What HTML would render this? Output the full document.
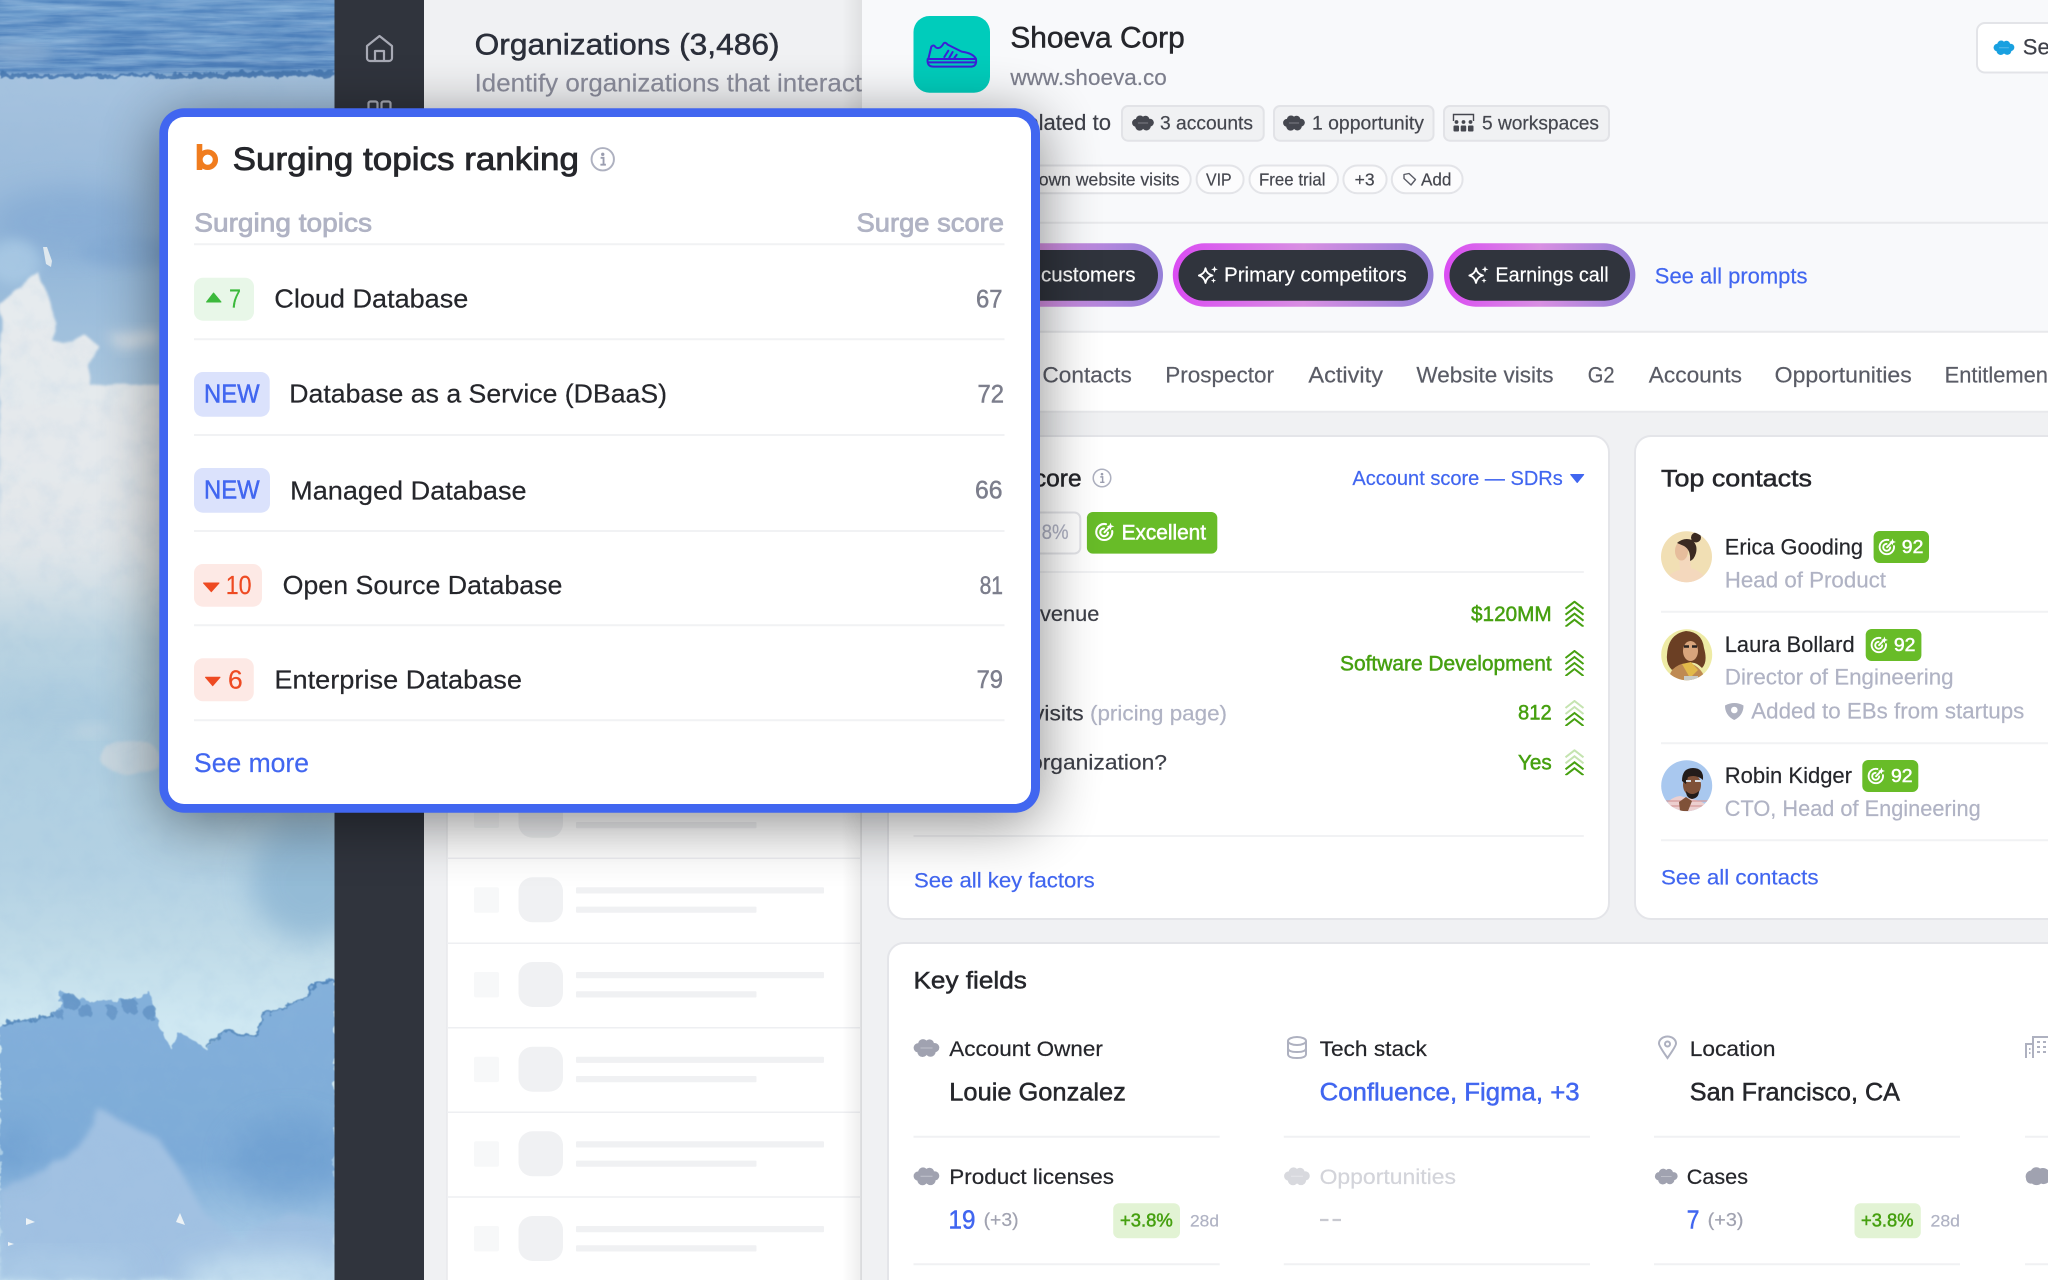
<!DOCTYPE html>
<html lang="en"><head><meta charset="utf-8"><title>Surging topics ranking</title>
<style>
html,body{margin:0;padding:0;width:2048px;height:1280px;overflow:hidden;background:#fff}
svg{display:block;position:absolute;left:0;top:0;overflow:hidden}
text{fill:currentColor;stroke:currentColor;stroke-width:.2;font-family:"Liberation Sans",Arial,sans-serif;white-space:pre}
.m{stroke-width:.5}.s{stroke-width:.8}
.d{color:#25262b}.g{color:#b0b3c4}.b{color:#4166f0}.t{color:#7c7e8c}.k{color:#3e4049}.l{color:#46a010}.w{color:#fff}.r{color:#ee4a22}.u{color:#5a5c66}
</style></head><body>
<svg width="2048" height="1280" viewBox="0 0 2048 1280" xmlns="http://www.w3.org/2000/svg">
<defs>
<clipPath id="bgc"><rect width="335" height="1280"/></clipPath>
<clipPath id="a1"><circle cx="1686.5" cy="556.7" r="25.5"/></clipPath>
<clipPath id="a2"><circle cx="1686.7" cy="654.7" r="25.5"/></clipPath>
<clipPath id="a3"><circle cx="1686.7" cy="785.7" r="25.5"/></clipPath>
<linearGradient id="base" x1="0" y1="0" x2="0" y2="1">
<stop offset="0" stop-color="#5386bf"/><stop offset=".055" stop-color="#4a7cb8"/><stop offset=".06" stop-color="#a6c3df"/><stop offset=".11" stop-color="#a0bedc"/><stop offset=".2" stop-color="#94b7d9"/><stop offset=".3" stop-color="#a9c6de"/><stop offset=".42" stop-color="#e0e6ea"/><stop offset=".47" stop-color="#ccdce5"/><stop offset=".5" stop-color="#bad3e1"/><stop offset=".56" stop-color="#afcee0"/><stop offset=".68" stop-color="#b3d1e3"/><stop offset=".74" stop-color="#c0dbe8"/><stop offset=".8" stop-color="#cfe8f2"/><stop offset="1" stop-color="#cfe8f2"/>
</linearGradient>
<linearGradient id="low" x1="0" y1="0" x2="0" y2="1">
<stop offset="0" stop-color="#84b0da"/><stop offset=".6" stop-color="#7dabd8"/><stop offset=".85" stop-color="#a2c6e4"/><stop offset="1" stop-color="#c2def0"/>
</linearGradient>
<linearGradient id="whf" x1="0" y1="0" x2="0" y2="1">
<stop offset="0" stop-color="#e6ebee"/><stop offset=".7" stop-color="#e4e8eb"/><stop offset="1" stop-color="#dfe5e9" stop-opacity="0"/>
</linearGradient>
<linearGradient id="pr" x1="0" y1="0" x2="1" y2="0">
<stop offset="0" stop-color="#da4cf2"/><stop offset=".5" stop-color="#d88fe2"/><stop offset="1" stop-color="#9580d8"/>
</linearGradient>
<linearGradient id="lsh" x1="0" y1="0" x2="1" y2="0">
<stop offset="0" stop-color="#000" stop-opacity="0"/><stop offset="1" stop-color="#000" stop-opacity=".07"/>
</linearGradient>
<filter id="w1" x="-10%" y="-10%" width="120%" height="120%"><feTurbulence type="fractalNoise" baseFrequency=".035" numOctaves="3" seed="4" result="n"/><feDisplacementMap in="SourceGraphic" in2="n" scale="9" result="d"/><feGaussianBlur in="d" stdDeviation="1.4"/></filter>
<filter id="w3" x="-10%" y="-10%" width="120%" height="120%"><feTurbulence type="fractalNoise" baseFrequency=".04" numOctaves="3" seed="6" result="n"/><feDisplacementMap in="SourceGraphic" in2="n" scale="12" result="d"/><feGaussianBlur in="d" stdDeviation="3"/></filter>
<filter id="w2" x="-10%" y="-10%" width="120%" height="120%"><feTurbulence type="fractalNoise" baseFrequency=".11" numOctaves="3" seed="9" result="n"/><feDisplacementMap in="SourceGraphic" in2="n" scale="10" result="d"/><feGaussianBlur in="d" stdDeviation=".6"/></filter>
<filter id="bl" x="-40%" y="-40%" width="180%" height="180%"><feGaussianBlur stdDeviation="14"/></filter>
<filter id="bl2" x="-40%" y="-40%" width="180%" height="180%"><feGaussianBlur stdDeviation="6"/></filter>
<filter id="sh" x="-30%" y="-30%" width="160%" height="160%"><feGaussianBlur stdDeviation="30"/></filter>
<filter id="str" x="0" y="0" width="100%" height="100%"><feTurbulence type="fractalNoise" baseFrequency=".012 .16" numOctaves="4" seed="3"/><feColorMatrix values="0 0 0 0 .22  0 0 0 0 .42  0 0 0 0 .68  1.8 0 0 0 -.55"/></filter>
<filter id="str2" x="0" y="0" width="100%" height="100%"><feTurbulence type="fractalNoise" baseFrequency=".02 .2" numOctaves="3" seed="11"/><feColorMatrix values="0 0 0 0 .6  0 0 0 0 .73  0 0 0 0 .88  2 0 0 0 -.8"/></filter>
<filter id="nz" x="0" y="0" width="100%" height="100%"><feTurbulence type="fractalNoise" baseFrequency=".05" numOctaves="4" seed="7"/><feColorMatrix values="0 0 0 0 .3  0 0 0 0 .5  0 0 0 0 .72  1.2 0 0 0 -.5"/></filter>
<symbol id="cl" viewBox="0 0 26 18" overflow="visible"><g fill="currentColor"><circle cx="9.5" cy="5" r="4.9"/><circle cx="16" cy="5" r="4.6"/><circle cx="21.2" cy="8.6" r="4.6"/><circle cx="17" cy="12.6" r="5.2"/><circle cx="9" cy="12.8" r="5.2"/><circle cx="4.8" cy="8.8" r="4.7"/><rect x="5" y="5" width="16" height="8"/></g><rect x="7" y="8.4" width="12" height="1.2" fill="#fff" opacity=".3"/></symbol>
<symbol id="ch" viewBox="0 0 20 26"><path d="M1 8 10 1l9 7M1 14l9-7 9 7M1 20l9-7 9 7M1 26l9-7 9 7" fill="none" stroke="#46a010" stroke-width="2"/></symbol>
<symbol id="chf" viewBox="0 0 20 26"><path d="M1 8 10 1l9 7M1 14l9-7 9 7" fill="none" stroke="#c5e4b0" stroke-width="2"/><path d="M1 20l9-7 9 7M1 26l9-7 9 7" fill="none" stroke="#46a010" stroke-width="2"/></symbol>
<symbol id="tg" viewBox="0 0 20 20"><g fill="none" stroke="#fff" stroke-width="2.1" stroke-linecap="round"><path d="M17.2 9A8 8 0 1 1 11 2.2"/><path d="M13 10.5A3.9 3.9 0 1 1 9 6.4"/><path d="M9.5 10.2 15.5 4"/></g><path d="M15.5 .6l1 2.8 2.9 1-2.9 1-1 2.8-1-2.8-2.8-1 2.8-1z" fill="#fff"/></symbol>
<symbol id="sp" viewBox="0 0 21 18"><path d="M7.5 2.2Q8.5 8 14.5 9.5 8.5 11 7.5 17 6.5 11 .8 9.5 6.5 8 7.5 2.2Z" fill="none" stroke="#fff" stroke-width="1.8" stroke-linejoin="round"/><path d="M16.5 0l.9 2.5 2.5.9-2.5.9-.9 2.5-.9-2.5-2.5-.9 2.5-.9zM15.5 12l.7 1.9 1.9.7-1.9.7-.7 1.9-.7-1.9-1.9-.7 1.9-.7z" fill="#fff"/></symbol>
<symbol id="inf" viewBox="0 0 26 26"><circle cx="13" cy="13" r="11.4" fill="none" stroke="#aeb1c0" stroke-width="2"/><circle cx="13" cy="8" r="1.7" fill="#9a9daf"/><path d="M10.8 11.5h3v7M10.6 18.6h5.6" fill="none" stroke="#9a9daf" stroke-width="1.9"/></symbol>
</defs>

<!-- watercolor -->
<g clip-path="url(#bgc)">
<rect width="335" height="1280" fill="url(#base)"/>
<rect width="335" height="74" filter="url(#str)"/>
<rect width="335" height="72" filter="url(#str2)" opacity=".28"/>
<ellipse cx="18" cy="52" rx="36" ry="9" fill="#90b0d3" filter="url(#bl2)" opacity=".8"/>
<path d="M0 73Q100 76 200 73T335 70V76Q200 79 0 78Z" fill="#3c70ab" filter="url(#w2)" opacity=".8"/>
<ellipse cx="70" cy="222" rx="80" ry="34" fill="#84aad4" filter="url(#bl)" opacity=".75"/>
<ellipse cx="130" cy="252" rx="50" ry="16" fill="#7ea6d1" filter="url(#bl2)" opacity=".55"/>
<ellipse cx="14" cy="262" rx="26" ry="22" fill="#abcbe5" filter="url(#bl2)" opacity=".8"/>
<path d="M0 305 38 272 58 325 52 340 62 343 85 335 98 345 88 365 90 385 159 383 175 395 335 400V600H0Z" fill="url(#whf)" filter="url(#w1)"/>
<path d="M43 247h4l5 14-1 6-5-3z" fill="#dfe8ee"/>
<path d="M105 335 158 330V345L120 350Z" fill="#d9e0e5" filter="url(#bl2)" opacity=".8"/>
<ellipse cx="130" cy="757" rx="30" ry="17" fill="#c8d7e0" filter="url(#w1)"/>
<ellipse cx="90" cy="730" rx="22" ry="6" fill="#c4d8e3" filter="url(#bl2)"/>
<ellipse cx="60" cy="710" rx="70" ry="24" fill="#a8c8dd" filter="url(#bl)" opacity=".6"/>
<ellipse cx="310" cy="880" rx="60" ry="60" fill="#86b1d0" filter="url(#bl)" opacity=".7"/>
<path d="M0 1023 30 1020 55 1015 62 992 90 1002 115 1000 127 1000 150 992 160 1028 170 1048 180 1032 205 1048 225 1032 255 1036 262 1015 275 1012 300 1000 320 980 335 980V1280H0Z" fill="url(#low)" filter="url(#w2)"/>
<path d="M0 1023 30 1020 55 1015M205 1046 225 1032 255 1036 262 1015 275 1012 300 1000 320 982 335 982" fill="none" stroke="#4a7fb5" stroke-width="2.4" filter="url(#w2)" opacity=".8"/>
<g fill="#5f90c2" filter="url(#w2)" opacity=".75"><circle cx="70" cy="1002" r="8"/><circle cx="85" cy="1011" r="7"/><circle cx="130" cy="1006" r="8"/><circle cx="150" cy="1012" r="7"/><circle cx="60" cy="1014" r="5"/><circle cx="112" cy="1012" r="6"/></g>
<path d="M0 1190 40 1170 75 1150 100 1110 130 1125 160 1140 180 1170 205 1215 240 1240 290 1210 335 1225V1280H0Z" fill="#a1c1e2" filter="url(#w3)"/>
<ellipse cx="290" cy="1160" rx="60" ry="42" fill="#6a9ccf" filter="url(#bl)" opacity=".6"/>
<ellipse cx="12" cy="1150" rx="22" ry="28" fill="#6a9ccf" filter="url(#bl)" opacity=".55"/>
<ellipse cx="270" cy="1278" rx="90" ry="26" fill="#c6e0f0" filter="url(#bl)" opacity=".9"/>
<ellipse cx="60" cy="1272" rx="80" ry="16" fill="#b3d1ea" filter="url(#bl)" opacity=".7"/>
<path d="M26 1218l9 4-9 3zM180 1213l5 12-9-3zM8 1242l6 2-6 2z" fill="#eef3f6"/>
<rect width="335" height="1280" filter="url(#nz)" opacity=".22"/>
</g>

<!-- sidebar -->
<rect x="334.5" width="90" height="1280" fill="#30343d"/>
<path d="M367 46 379.5 36 392 46V58a3 3 0 0 1-3 3H370a3 3 0 0 1-3-3ZM375 61V51h9V61" fill="none" stroke="#a8aab5" stroke-width="2.2" stroke-linejoin="round"/>
<rect x="368.5" y="101.5" width="9" height="12" rx="2" fill="none" stroke="#a8aab5" stroke-width="2.2"/>
<rect x="381.5" y="101.5" width="9" height="12" rx="2" fill="none" stroke="#a8aab5" stroke-width="2.2"/>

<!-- main panel -->
<rect x="424" width="438" height="1280" fill="#f0f1f3"/>
<text x="474.6" y="54.3" font-size="29.5" textLength="305" lengthAdjust="spacingAndGlyphs" class="m" style="color:#2b2f3a">Organizations (3,486)</text>
<text x="474.6" y="91.3" font-size="25" textLength="387.4" lengthAdjust="spacingAndGlyphs" style="color:#8b8d9c">Identify organizations that interact</text>
<rect x="447" y="118" width="414.5" height="1162" fill="#fff"/>
<path d="M447 118V1280M861 118V1280" stroke="#e8e9ec" stroke-width="1.5"/>
<path d="M447 858.3H861M447 943.3H861M447 1027.7H861M447 1112.3H861M447 1197H861" stroke="#eeeff2" stroke-width="1.5"/>
<g fill="#f7f8f9"><rect x="474" y="802.6" width="25" height="25.4" rx="2"/><rect x="474" y="887.3" width="25" height="25.4" rx="2"/><rect x="474" y="972" width="25" height="25.4" rx="2"/><rect x="474" y="1056.7" width="25" height="25.4" rx="2"/><rect x="474" y="1141.3" width="25" height="25.4" rx="2"/><rect x="474" y="1226" width="25" height="25.4" rx="2"/></g>
<g fill="#f0f1f3">
<rect x="518.5" y="792.7" width="44.5" height="45" rx="14"/><rect x="518.5" y="877.3" width="44.5" height="45" rx="14"/><rect x="518.5" y="962" width="44.5" height="45" rx="14"/><rect x="518.5" y="1046.7" width="44.5" height="45" rx="14"/><rect x="518.5" y="1131.3" width="44.5" height="45" rx="14"/><rect x="518.5" y="1216" width="44.5" height="45" rx="14"/>
<rect x="576" y="822" width="180.5" height="6.2" rx="1"/>
<rect x="576" y="887.3" width="248" height="6.2" rx="1"/><rect x="576" y="906.6" width="180.5" height="6.2" rx="1"/>
<rect x="576" y="972" width="248" height="6.2" rx="1"/><rect x="576" y="991.3" width="180.5" height="6.2" rx="1"/>
<rect x="576" y="1056.7" width="248" height="6.2" rx="1"/><rect x="576" y="1076" width="180.5" height="6.2" rx="1"/>
<rect x="576" y="1141.3" width="248" height="6.2" rx="1"/><rect x="576" y="1160.6" width="180.5" height="6.2" rx="1"/>
<rect x="576" y="1226" width="248" height="6.2" rx="1"/><rect x="576" y="1245.3" width="180.5" height="6.2" rx="1"/>
</g>
<rect x="842" width="20" height="1280" fill="url(#lsh)"/>

<!-- right panel -->
<rect x="862" width="1186" height="1280" fill="#f0f1f3"/>
<rect x="862" width="1186" height="332" fill="#f8f9fb"/>
<rect x="862" y="332" width="1186" height="80" fill="#fff"/>
<path d="M862 222.7H2048M862 331.7H2048M862 411.7H2048" stroke="#e8e9ec" stroke-width="2"/>
<rect x="913.5" y="16" width="76.5" height="76.7" rx="16" fill="#00ccbb"/>
<g transform="translate(905 10) scale(.3333)" fill="none" stroke="#3b1fd6" stroke-width="6" stroke-linecap="round" stroke-linejoin="round">
<path d="M70 147 79 110Q86 102 92 112 105 120 116 100 121 95 128 104L170 125Q205 130 213 147"/>
<path d="M68 147H213Q216 168 200 170H86Q65 170 68 147ZM70 157H213"/>
<path d="M118 141 130 122M133 143 143 126M148 144 155 134"/>
</g>
<text x="1010.4" y="47.7" font-size="30" textLength="174.3" lengthAdjust="spacingAndGlyphs" class="m d">Shoeva Corp</text>
<text x="1010.4" y="85" font-size="22" textLength="156.4" lengthAdjust="spacingAndGlyphs" class="t">www.shoeva.co</text>
<text x="1010.4" y="130" font-size="22" textLength="100.6" lengthAdjust="spacingAndGlyphs" class="k">Related to</text>

<path d="M2048 23H1985a8 8 0 0 0-8 8V64.5a8 8 0 0 0 8 8H2048Z" fill="#fff"/>
<path d="M2048 23H1985a8 8 0 0 0-8 8V64.5a8 8 0 0 0 8 8H2048" fill="none" stroke="#e3e4e8" stroke-width="2"/>
<use href="#cl" x="1993.5" y="40" width="21" height="15.5" style="color:#18a0e0"/>
<text x="2022.8" y="54.3" font-size="22" class="k">Se</text>

<g fill="#f0f1f3" stroke="#e2e3e7" stroke-width="2"><rect x="1122" y="106" width="141.7" height="34.7" rx="6"/><rect x="1274" y="106" width="159.5" height="34.7" rx="6"/><rect x="1444" y="106" width="165" height="34.7" rx="6"/></g>
<use href="#cl" x="1132" y="114.5" width="22" height="17" style="color:#45474f"/>
<use href="#cl" x="1283" y="114.5" width="22" height="17" style="color:#45474f"/>
<g fill="none" stroke="#45474f" stroke-width="1.4"><path d="M1453.5 121v-6.500h20v6.500"/></g>
<g fill="#45474f"><circle cx="1456.5" cy="122" r="1.9"/><circle cx="1463.5" cy="122" r="1.9"/><circle cx="1470.5" cy="122" r="1.9"/><rect x="1453.5" y="125.5" width="5.5" height="6" rx="1"/><rect x="1460.7" y="125.5" width="5.5" height="6" rx="1"/><rect x="1468" y="125.5" width="5.5" height="6" rx="1"/></g>
<g style="color:#45474f">
<text x="1160" y="129.3" font-size="19" textLength="93" lengthAdjust="spacingAndGlyphs">3 accounts</text>
<text x="1312" y="129.3" font-size="19" textLength="112" lengthAdjust="spacingAndGlyphs">1 opportunity</text>
<text x="1482" y="129.3" font-size="19" textLength="117" lengthAdjust="spacingAndGlyphs">5 workspaces</text>
</g>

<g fill="#fcfcfd" stroke="#e3e4e8" stroke-width="2"><rect x="1000" y="165.5" width="190.7" height="27.8" rx="13.9"/><rect x="1196.6" y="165.5" width="47" height="27.8" rx="13.9"/><rect x="1249.5" y="165.5" width="88.5" height="27.8" rx="13.9"/><rect x="1343.4" y="165.5" width="43.2" height="27.8" rx="13.9"/><rect x="1391.8" y="165.5" width="70.8" height="27.8" rx="13.9"/></g>
<g style="color:#45474f">
<text x="1038.7" y="185.3" font-size="17.5" textLength="140.8" lengthAdjust="spacingAndGlyphs">own website visits</text>
<text x="1206" y="185.3" font-size="17.5" textLength="25.6" lengthAdjust="spacingAndGlyphs">VIP</text>
<text x="1259" y="185.3" font-size="17.5" textLength="66.5" lengthAdjust="spacingAndGlyphs">Free trial</text>
<text x="1354.6" y="185.3" font-size="17.5" textLength="20" lengthAdjust="spacingAndGlyphs">+3</text>
<text x="1421" y="185.3" font-size="17.5" textLength="30.4" lengthAdjust="spacingAndGlyphs">Add</text>
</g>
<path d="M1404 174.5l5-1 6.500 6-4.500 5.500-7-6.500Z" fill="none" stroke="#5a5c66" stroke-width="1.4" stroke-linejoin="round"/>

<!-- prompt pills -->
<rect x="900" y="243.3" width="263" height="63.4" rx="31.7" fill="url(#pr)"/>
<rect x="906" y="250" width="252" height="50.7" rx="25.3" fill="#30343d"/>
<rect x="1172.8" y="243.3" width="260.7" height="63.4" rx="31.7" fill="url(#pr)"/>
<rect x="1178.5" y="250" width="249.5" height="50.7" rx="25.3" fill="#30343d"/>
<rect x="1444" y="243.3" width="191.4" height="63.4" rx="31.7" fill="url(#pr)"/>
<rect x="1449.5" y="250" width="180.5" height="50.7" rx="25.3" fill="#30343d"/>
<use href="#sp" x="1198" y="266" width="21" height="18"/>
<use href="#sp" x="1468.5" y="266" width="21" height="18"/>
<text x="1041" y="281.7" font-size="20.5" textLength="94.5" lengthAdjust="spacingAndGlyphs" class="w">customers</text>
<text x="1224" y="281.7" font-size="20.5" textLength="182.7" lengthAdjust="spacingAndGlyphs" class="w">Primary competitors</text>
<text x="1495.4" y="281.7" font-size="20.5" textLength="113.2" lengthAdjust="spacingAndGlyphs" class="w">Earnings call</text>
<text x="1654.8" y="283.3" font-size="22" textLength="152.7" lengthAdjust="spacingAndGlyphs" class="b">See all prompts</text>

<!-- tabs -->
<g class="u">
<text x="1042.4" y="382.5" font-size="22" textLength="89.4" lengthAdjust="spacingAndGlyphs">Contacts</text>
<text x="1165.3" y="382.5" font-size="22" textLength="108.7" lengthAdjust="spacingAndGlyphs">Prospector</text>
<text x="1308.4" y="382.5" font-size="22" textLength="74.6" lengthAdjust="spacingAndGlyphs">Activity</text>
<text x="1416.4" y="382.5" font-size="22" textLength="137.1" lengthAdjust="spacingAndGlyphs">Website visits</text>
<text x="1587.8" y="382.5" font-size="22" textLength="26.8" lengthAdjust="spacingAndGlyphs">G2</text>
<text x="1648.8" y="382.5" font-size="22" textLength="93.2" lengthAdjust="spacingAndGlyphs">Accounts</text>
<text x="1774.7" y="382.5" font-size="22" textLength="137.1" lengthAdjust="spacingAndGlyphs">Opportunities</text>
<text x="1944.6" y="382.5" font-size="22" textLength="103.4" lengthAdjust="spacingAndGlyphs">Entitlemen</text>
</g>

<!-- score card -->
<rect x="888" y="436" width="721" height="483" rx="16" fill="#fff" stroke="#e4e5e9" stroke-width="2"/>
<text x="1081.6" y="486.5" font-size="24.5" text-anchor="end" class="m d">Account score</text>
<use href="#inf" x="1092" y="468" width="20" height="20"/>
<text x="1352.4" y="485" font-size="20.5" textLength="210.4" lengthAdjust="spacingAndGlyphs" class="b">Account score — SDRs</text>
<path d="M1570.7 474.5h13l-6.500 8Z" fill="#4166f0" stroke="#4166f0" stroke-linejoin="round"/>
<rect x="990" y="512.5" width="90.3" height="41" rx="6" fill="#fff" stroke="#e3e4e8" stroke-width="2"/>
<text x="1041.6" y="539" font-size="21" textLength="27" lengthAdjust="spacingAndGlyphs" class="g">8%</text>
<rect x="1086.9" y="512" width="130.4" height="41.6" rx="6" fill="#68bc28"/>
<use href="#tg" x="1095" y="522" width="20" height="20"/>
<text x="1121.6" y="539.3" font-size="21" textLength="84.4" lengthAdjust="spacingAndGlyphs" class="m w">Excellent</text>
<path d="M913.5 572H1583.8M913.5 836H1583.8" stroke="#f1f2f4" stroke-width="2"/>
<text x="1040" y="621" font-size="21" textLength="59.3" lengthAdjust="spacingAndGlyphs" class="k">venue</text>
<text x="1033" y="720.3" font-size="21" textLength="50.6" lengthAdjust="spacingAndGlyphs" class="k">visits</text>
<text x="1090" y="720.3" font-size="21" textLength="137" lengthAdjust="spacingAndGlyphs" class="g">(pricing page)</text>
<text x="1030" y="769.5" font-size="21" textLength="137" lengthAdjust="spacingAndGlyphs" class="k">organization?</text>
<text x="1471" y="621" font-size="21" textLength="80.7" lengthAdjust="spacingAndGlyphs" class="m l">$120MM</text>
<text x="1340" y="670.3" font-size="21" textLength="211.7" lengthAdjust="spacingAndGlyphs" class="m l">Software Development</text>
<text x="1518" y="719.7" font-size="21" textLength="33.7" lengthAdjust="spacingAndGlyphs" class="m l">812</text>
<text x="1518" y="769.3" font-size="21" textLength="33.7" lengthAdjust="spacingAndGlyphs" class="m l">Yes</text>
<use href="#ch" x="1564.5" y="600.7" width="20" height="26"/>
<use href="#ch" x="1564.5" y="650" width="20" height="26"/>
<use href="#chf" x="1564.5" y="700" width="20" height="26"/>
<use href="#chf" x="1564.5" y="749.3" width="20" height="26"/>
<text x="914" y="887.7" font-size="21.5" textLength="180.7" lengthAdjust="spacingAndGlyphs" class="b">See all key factors</text>

<!-- contacts card -->
<path d="M2048 436H1651a16 16 0 0 0-16 16V903a16 16 0 0 0 16 16H2048Z" fill="#fff"/>
<path d="M2048 436H1651a16 16 0 0 0-16 16V903a16 16 0 0 0 16 16H2048" fill="none" stroke="#e4e5e9" stroke-width="2"/>
<text x="1661" y="486.5" font-size="24.5" textLength="151" lengthAdjust="spacingAndGlyphs" class="m d">Top contacts</text>
<path d="M1661 611.7H2048M1661 743.3H2048M1661 840.3H2048" stroke="#f1f2f4" stroke-width="2"/>
<!-- avatars -->
<g clip-path="url(#a1)"><rect x="1660" y="530" width="54" height="54" fill="#f1dfb4"/>
<path d="M1664 585Q1668 572 1680 570L1679 558 1690 556 1691 568Q1704 572 1710 585Z" fill="#f4d8bd"/>
<ellipse cx="1681.5" cy="551" rx="6.5" ry="9.5" fill="#e6bd9c"/>
<path d="M1677 543Q1684 537 1692 540 1698 545 1696 553 1694 560 1690 561 1691 550 1684 546Z" fill="#3b2a22"/><circle cx="1696" cy="537.5" r="5" fill="#3b2a22"/></g>
<g clip-path="url(#a2)"><rect x="1660" y="628" width="54" height="54" fill="#eeeba5"/>
<path d="M1668 682Q1670 666 1684 662 1702 664 1706 682Z" fill="#bf8a52"/>
<path d="M1667 655Q1668 634 1686 631 1702 632 1704 648 1708 662 1702 668 1694 660 1688 664 1680 662 1672 670 1666 664 1667 655Z" fill="#6b3f24"/>
<ellipse cx="1690.5" cy="651" rx="7.5" ry="10" fill="#d9a57c"/>
<path d="M1684 646.5h5M1692 646.5h5" stroke="#2a2320" stroke-width="2.5"/>
<path d="M1682 664l9-2 7 8-8 8Z" fill="#e2b94a"/>
<path d="M1684 676h14v6h-14Z" fill="#c9cbc6"/></g>
<g clip-path="url(#a3)"><rect x="1660" y="759" width="54" height="54" fill="#a9c8ef"/>
<path d="M1664 812Q1666 798 1680 796L1696 800Q1706 802 1712 812Z" fill="#eccfcf"/>
<path d="M1668 806l40 0M1666 801l42 0" stroke="#d59a9a" stroke-width="1.3"/>
<ellipse cx="1692" cy="785" rx="9" ry="11" fill="#7f5138"/>
<path d="M1682 781Q1682 768 1693 768 1704 768 1703 780 1696 774 1688 777L1686 784Z" fill="#231c1a"/>
<path d="M1686 781h5M1695 781h6" stroke="#d8dde4" stroke-width="2"/>
<path d="M1686 791q6 6 13 0 0 7-7 8-6-1-6-8Z" fill="#231c1a"/>
<path d="M1679 802l7-5 6 4-4 10h-8Z" fill="#7f5138"/></g>

<text x="1724.8" y="554.3" font-size="22.5" textLength="138.2" lengthAdjust="spacingAndGlyphs" class="d">Erica Gooding</text>
<text x="1724.8" y="652" font-size="22.5" textLength="129.8" lengthAdjust="spacingAndGlyphs" class="d">Laura Bollard</text>
<text x="1724.8" y="783" font-size="22.5" textLength="127.2" lengthAdjust="spacingAndGlyphs" class="d">Robin Kidger</text>
<text x="1724.8" y="587.3" font-size="22" textLength="161.2" lengthAdjust="spacingAndGlyphs" class="g">Head of Product</text>
<text x="1724.8" y="684.3" font-size="22" textLength="228.8" lengthAdjust="spacingAndGlyphs" class="g">Director of Engineering</text>
<text x="1751.3" y="718.3" font-size="22" textLength="273" lengthAdjust="spacingAndGlyphs" class="g">Added to EBs from startups</text>
<text x="1724.8" y="816" font-size="22" textLength="255.9" lengthAdjust="spacingAndGlyphs" class="g">CTO, Head of Engineering</text>
<path d="M1725 705.5q9.500-5 18.500 0 0 10-9.300 14.500-9.200-4.500-9.200-14.500Z" fill="#aeb1c0"/><circle cx="1734.3" cy="710" r="3.3" fill="#fff"/>
<g fill="#68bc28"><rect x="1873.6" y="531" width="55.4" height="32" rx="6"/><rect x="1865.7" y="629" width="55.7" height="32" rx="6"/><rect x="1862.3" y="760" width="56" height="32" rx="6"/></g>
<use href="#tg" x="1878.5" y="538" width="18" height="18"/>
<use href="#tg" x="1870.5" y="636" width="18" height="18"/>
<use href="#tg" x="1867.5" y="767" width="18" height="18"/>
<text x="1901.8" y="553" font-size="18" textLength="21.6" lengthAdjust="spacingAndGlyphs" class="m w">92</text>
<text x="1893.9" y="651" font-size="18" textLength="21.6" lengthAdjust="spacingAndGlyphs" class="m w">92</text>
<text x="1891" y="782" font-size="18" textLength="21.6" lengthAdjust="spacingAndGlyphs" class="m w">92</text>
<text x="1661" y="884.7" font-size="21.5" textLength="157.5" lengthAdjust="spacingAndGlyphs" class="b">See all contacts</text>

<!-- key fields -->
<path d="M2048 943H904a16 16 0 0 0-16 16V1280H2048Z" fill="#fff"/>
<path d="M2048 943H904a16 16 0 0 0-16 16V1280" fill="none" stroke="#e4e5e9" stroke-width="2"/>
<text x="913.5" y="988.3" font-size="24.5" textLength="113.3" lengthAdjust="spacingAndGlyphs" class="m d">Key fields</text>
<use href="#cl" x="913.5" y="1039" width="26" height="18" style="color:#a0a2b0"/>
<use href="#cl" x="913.5" y="1167.3" width="26" height="18" style="color:#a0a2b0"/>
<use href="#cl" x="1284" y="1167.3" width="26" height="18" style="color:#d8d9de"/>
<use href="#cl" x="1654.8" y="1168" width="23" height="17" style="color:#a0a2b0"/>
<path d="M2048 1170a8 8 0 0 0-8-1.500 6 6 0 0 0-9 2 6 6 0 0 0-5 8 5 5 0 0 0 6 5 7 7 0 0 0 9 0 7 7 0 0 0 7-1Z" fill="#a0a2b0"/>
<g fill="none" stroke="#aeb1c0" stroke-width="2">
<ellipse cx="1297" cy="1041" rx="9" ry="4"/><path d="M1288 1041V1054Q1288 1058 1297 1058 1306 1058 1306 1054V1041M1288 1048Q1288 1052 1297 1052 1306 1052 1306 1048"/>
<path d="M1667.5 1058Q1659 1046 1659 1043.5A8.500 7 0 0 1 1676 1043.5Q1676 1046 1667.5 1058Z"/><circle cx="1667.5" cy="1044" r="2.5"/>
<path d="M2026 1058V1044H2033M2033 1058V1037H2048"/>
<path d="M2037 1042h3M2043 1042h3M2037 1047h3M2043 1047h3M2037 1052h3M2043 1052h3M2029 1049h1.500M2029 1053h1.500"/>
</g>
<g class="d">
<text x="949.3" y="1056" font-size="21.5" textLength="153.5" lengthAdjust="spacingAndGlyphs">Account Owner</text>
<text x="1319.6" y="1056" font-size="21.5" textLength="107.2" lengthAdjust="spacingAndGlyphs">Tech stack</text>
<text x="1689.8" y="1056" font-size="21.5" textLength="85.7" lengthAdjust="spacingAndGlyphs">Location</text>
<text x="949.3" y="1184" font-size="21.5" textLength="164.7" lengthAdjust="spacingAndGlyphs">Product licenses</text>
<text x="1686.8" y="1184" font-size="21.5" textLength="61.2" lengthAdjust="spacingAndGlyphs">Cases</text>
</g>
<text x="1319.6" y="1184" font-size="21.5" textLength="136.4" lengthAdjust="spacingAndGlyphs" style="color:#d3d4da">Opportunities</text>
<text x="949.3" y="1100.7" font-size="25" textLength="176.6" lengthAdjust="spacingAndGlyphs" class="m d">Louie Gonzalez</text>
<text x="1319.6" y="1100.7" font-size="25" textLength="260" lengthAdjust="spacingAndGlyphs" class="m b">Confluence, Figma, +3</text>
<text x="1689.8" y="1100.7" font-size="25" textLength="210.2" lengthAdjust="spacingAndGlyphs" class="m d">San Francisco, CA</text>
<path d="M913.5 1136.7H1219.7M1283.8 1136.7H1590M1654 1136.7H1960M2025 1136.7H2048M913.5 1264.3H1219.7M1283.8 1264.3H1590M1654 1264.3H1960M2025 1264.3H2048" stroke="#f0f1f3" stroke-width="2"/>
<text x="948.5" y="1228.3" font-size="26" textLength="26.9" lengthAdjust="spacingAndGlyphs" class="m b">19</text>
<text x="1686.8" y="1228.3" font-size="26" textLength="12.7" lengthAdjust="spacingAndGlyphs" class="m b">7</text>
<text x="983.6" y="1226" font-size="18" textLength="35" lengthAdjust="spacingAndGlyphs" style="color:#a0a2b0">(+3)</text>
<text x="1707.7" y="1226" font-size="18" textLength="35.8" lengthAdjust="spacingAndGlyphs" style="color:#a0a2b0">(+3)</text>
<rect x="1113.2" y="1203.3" width="66.8" height="35" rx="6" fill="#e2f3d4"/>
<rect x="1854.5" y="1203.3" width="66.3" height="35" rx="6" fill="#e2f3d4"/>
<text x="1120" y="1226.7" font-size="18" textLength="52.8" lengthAdjust="spacingAndGlyphs" class="m l">+3.8%</text>
<text x="1861" y="1226.7" font-size="18" textLength="52.5" lengthAdjust="spacingAndGlyphs" class="m l">+3.8%</text>
<text x="1190" y="1226.7" font-size="17" textLength="29" lengthAdjust="spacingAndGlyphs" class="g">28d</text>
<text x="1930.5" y="1226.7" font-size="17" textLength="29.5" lengthAdjust="spacingAndGlyphs" class="g">28d</text>
<path d="M1320 1220h8.500M1332.5 1220h8.500" stroke="#c8c9d0" stroke-width="2.2"/>

<!-- popup card -->
<rect x="159" y="118" width="881" height="705" rx="26" fill="#000" opacity=".46" filter="url(#sh)"/>
<rect x="159.3" y="108.3" width="880.7" height="704.5" rx="25" fill="#4166f0"/>
<rect x="168" y="117" width="863" height="687" rx="16" fill="#fff"/>
<rect x="196.7" y="144" width="5.6" height="26" fill="#f07c1e"/>
<circle cx="207.7" cy="159.7" r="7.7" fill="none" stroke="#f07c1e" stroke-width="5.3"/>
<text x="232.7" y="170" font-size="32" textLength="346.3" lengthAdjust="spacingAndGlyphs" class="s d">Surging topics ranking</text>
<use href="#inf" x="590" y="146.5" width="25.5" height="25.5"/>
<text x="194.3" y="231.5" font-size="26" textLength="177.7" lengthAdjust="spacingAndGlyphs" class="s g">Surging topics</text>
<text x="856.5" y="231.5" font-size="26" textLength="147.5" lengthAdjust="spacingAndGlyphs" class="s g">Surge score</text>
<path d="M194 244.3H1004.5M194 339.3H1004.5M194 435H1004.5M194 531H1004.5M194 625.3H1004.5M194 720.3H1004.5" stroke="#f1f2f4" stroke-width="2"/>

<rect x="194" y="277.7" width="60" height="43" rx="9" fill="#e8f7e8"/>
<path d="M206.5 302 213.5 293 221 302Z" fill="#3cb93c" stroke="#3cb93c" stroke-linejoin="round"/>
<text x="229" y="307.7" font-size="26" textLength="12" lengthAdjust="spacingAndGlyphs" style="color:#3cb93c">7</text>
<text x="274.3" y="307.7" font-size="26" textLength="194" lengthAdjust="spacingAndGlyphs" class="d">Cloud Database</text>
<text x="976" y="307.3" font-size="25" textLength="26.5" lengthAdjust="spacingAndGlyphs" class="m t">67</text>

<rect x="194" y="372" width="75.7" height="44.7" rx="9" fill="#dbe2fc"/>
<text x="204" y="402.3" font-size="26" textLength="55.6" lengthAdjust="spacingAndGlyphs" class="m b">NEW</text>
<text x="289.3" y="402.7" font-size="26" textLength="377.7" lengthAdjust="spacingAndGlyphs" class="d">Database as a Service (DBaaS)</text>
<text x="977.5" y="402.5" font-size="25" textLength="26.5" lengthAdjust="spacingAndGlyphs" class="m t">72</text>

<rect x="194" y="468" width="76" height="44.7" rx="9" fill="#dbe2fc"/>
<text x="204" y="498.7" font-size="26" textLength="55.7" lengthAdjust="spacingAndGlyphs" class="m b">NEW</text>
<text x="290.2" y="499.3" font-size="26" textLength="236.4" lengthAdjust="spacingAndGlyphs" class="d">Managed Database</text>
<text x="975" y="498.7" font-size="25" textLength="27.5" lengthAdjust="spacingAndGlyphs" class="m t">66</text>

<rect x="194" y="564" width="68" height="42.7" rx="9" fill="#fde9e5"/>
<path d="M203.5 583 219 583 211.3 591.7Z" fill="#ee4a22" stroke="#ee4a22" stroke-linejoin="round"/>
<text x="225.7" y="594" font-size="26" textLength="25.8" lengthAdjust="spacingAndGlyphs" class="r">10</text>
<text x="282.6" y="594" font-size="26" textLength="279.8" lengthAdjust="spacingAndGlyphs" class="d">Open Source Database</text>
<text x="979.6" y="594" font-size="25" textLength="23.4" lengthAdjust="spacingAndGlyphs" class="m t">81</text>

<rect x="194" y="658.3" width="59.8" height="43" rx="9" fill="#fde9e5"/>
<path d="M205.5 677.3 220 677.3 212.7 685.7Z" fill="#ee4a22" stroke="#ee4a22" stroke-linejoin="round"/>
<text x="228" y="688.3" font-size="26" textLength="14.7" lengthAdjust="spacingAndGlyphs" class="r">6</text>
<text x="274.4" y="688.3" font-size="26" textLength="247.6" lengthAdjust="spacingAndGlyphs" class="d">Enterprise Database</text>
<text x="976.6" y="688" font-size="25" textLength="26.4" lengthAdjust="spacingAndGlyphs" class="m t">79</text>

<text x="194" y="772" font-size="27" textLength="115" lengthAdjust="spacingAndGlyphs" class="b">See more</text>
</svg>
</body></html>
